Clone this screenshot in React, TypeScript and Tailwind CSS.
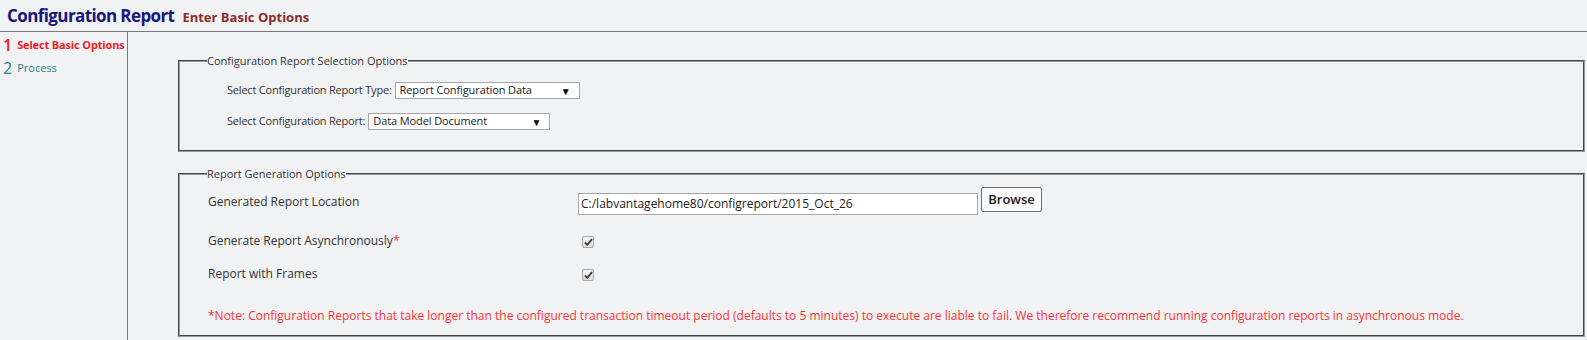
import React from "react";

const font = { fontFamily: '"Open Sans", "Noto Sans", Arial, sans-serif' };

function Check() {
  return (
    <span className="inline-flex h-[12px] w-[12px] items-center justify-center rounded-[2px] border border-[#a9a9a9] bg-gradient-to-b from-[#f4f4f4] to-[#dcdcdc]">
      <svg width="9" height="8" viewBox="0 0 9 8">
        <path d="M1 4.5 L3.3 6.8 L8 1.2" fill="none" stroke="#3a3a3a" strokeWidth="1.8" />
      </svg>
    </span>
  );
}

function Select({ value, width }: { value: string; width: string }) {
  return (
    <div
      className={`flex h-[17px] ${width} items-center justify-between border border-[#a6a6a6] bg-white pl-[4px] pr-[8px] text-[11px] tracking-[-0.1px] text-[#222]`}
    >
      <span>{value}</span>
      <span className="text-[10px] leading-none text-black">▼</span>
    </div>
  );
}

export default function App() {
  return (
    <div style={font} className="h-[340px] w-[1587px] overflow-hidden bg-[#f1f2f4] text-[#333]">
      <div className="flex h-[32px] items-baseline gap-[8px] border-b border-[#7a7a7a] pl-[7px] pt-[3px]">
        <span className="text-[17px] font-bold tracking-[-0.6px] text-[#17177a]">Configuration Report</span>
        <span className="text-[13px] font-bold text-[#8c2b2b]">Enter Basic Options</span>
      </div>
      <div className="flex h-[308px]">
        <div className="w-[128px] shrink-0 border-r border-[#7a7a7a] pl-[3px] pt-[3px]">
          <div className="flex h-[20px] items-center gap-[5px] whitespace-nowrap">
            <span className="text-[16px] font-semibold text-[#ee1c1c]">1</span>
            <span className="text-[11px] font-bold tracking-[-0.15px] text-[#ee1c1c]">Select Basic Options</span>
          </div>
          <div className="mt-[3px] flex h-[20px] items-center gap-[5px] whitespace-nowrap">
            <span className="text-[16px] text-[#2a7f86]">2</span>
            <span className="text-[11px] text-[#2a7f86]">Process</span>
          </div>
        </div>
        <div className="flex-1 pl-[50px] pr-[2px] pt-[21px]">
          <fieldset className="border-2 border-[#9a9a9a] px-[27px] pb-[20px] pt-[14px] [border-style:groove]">
            <legend className="text-[11px] leading-[15px] text-[#333]">Configuration Report Selection Options</legend>
            <div className="ml-[20px] flex items-center gap-[3px] text-[11px]">
              <span className="tracking-[-0.2px]">Select Configuration Report Type:</span>
              <Select value="Report Configuration Data" width="w-[185px]" />
            </div>
            <div className="ml-[20px] mt-[14px] flex items-center gap-[3px] text-[11px]">
              <span className="tracking-[-0.2px]">Select Configuration Report:</span>
              <Select value="Data Model Document" width="w-[182px]" />
            </div>
          </fieldset>
          <fieldset className="mt-[14px] border-2 border-[#9a9a9a] px-[28px] pb-[11px] pt-[6px] [border-style:groove]">
            <legend className="-ml-[1px] text-[11px] leading-[15px] text-[#333]">Report Generation Options</legend>
            <div className="flex h-[28px] items-start text-[12px]">
              <span className="mt-[6px] w-[370px] leading-[17px]">Generated Report Location</span>
              <div className="mt-[6px] flex h-[22px] w-[400px] items-center border border-[#a6a6a6] bg-white px-[2px] text-[12px] text-[#222]">
                C:/labvantagehome80/configreport/2015_Oct_26
              </div>
              <button className="ml-[3px] h-[25px] w-[61px] rounded-[2px] border border-[#6e6e6e] bg-[#fafafa] text-[13px] font-semibold text-[#222]">
                Browse
              </button>
            </div>
            <div className="mt-[17px] flex h-[17px] items-start text-[12px]">
              <span className="w-[374px] leading-[17px]">
                Generate Report Asynchronously<span className="text-[#ff2a2a]">*</span>
              </span>
              <span className="mt-[1px]"><Check /></span>
            </div>
            <div className="mt-[16px] flex h-[17px] items-start text-[12px]">
              <span className="w-[374px] leading-[17px]">Report with Frames</span>
              <span className="mt-[1px]"><Check /></span>
            </div>
            <div className="mt-[25px] text-[12px] leading-[17px] text-[#ff3333]">
              *Note: Configuration Reports that take longer than the configured transaction timeout period (defaults to 5 minutes) to execute are liable to fail. We therefore recommend running configuration reports in asynchronous mode.
            </div>
          </fieldset>
        </div>
      </div>
    </div>
  );
}
